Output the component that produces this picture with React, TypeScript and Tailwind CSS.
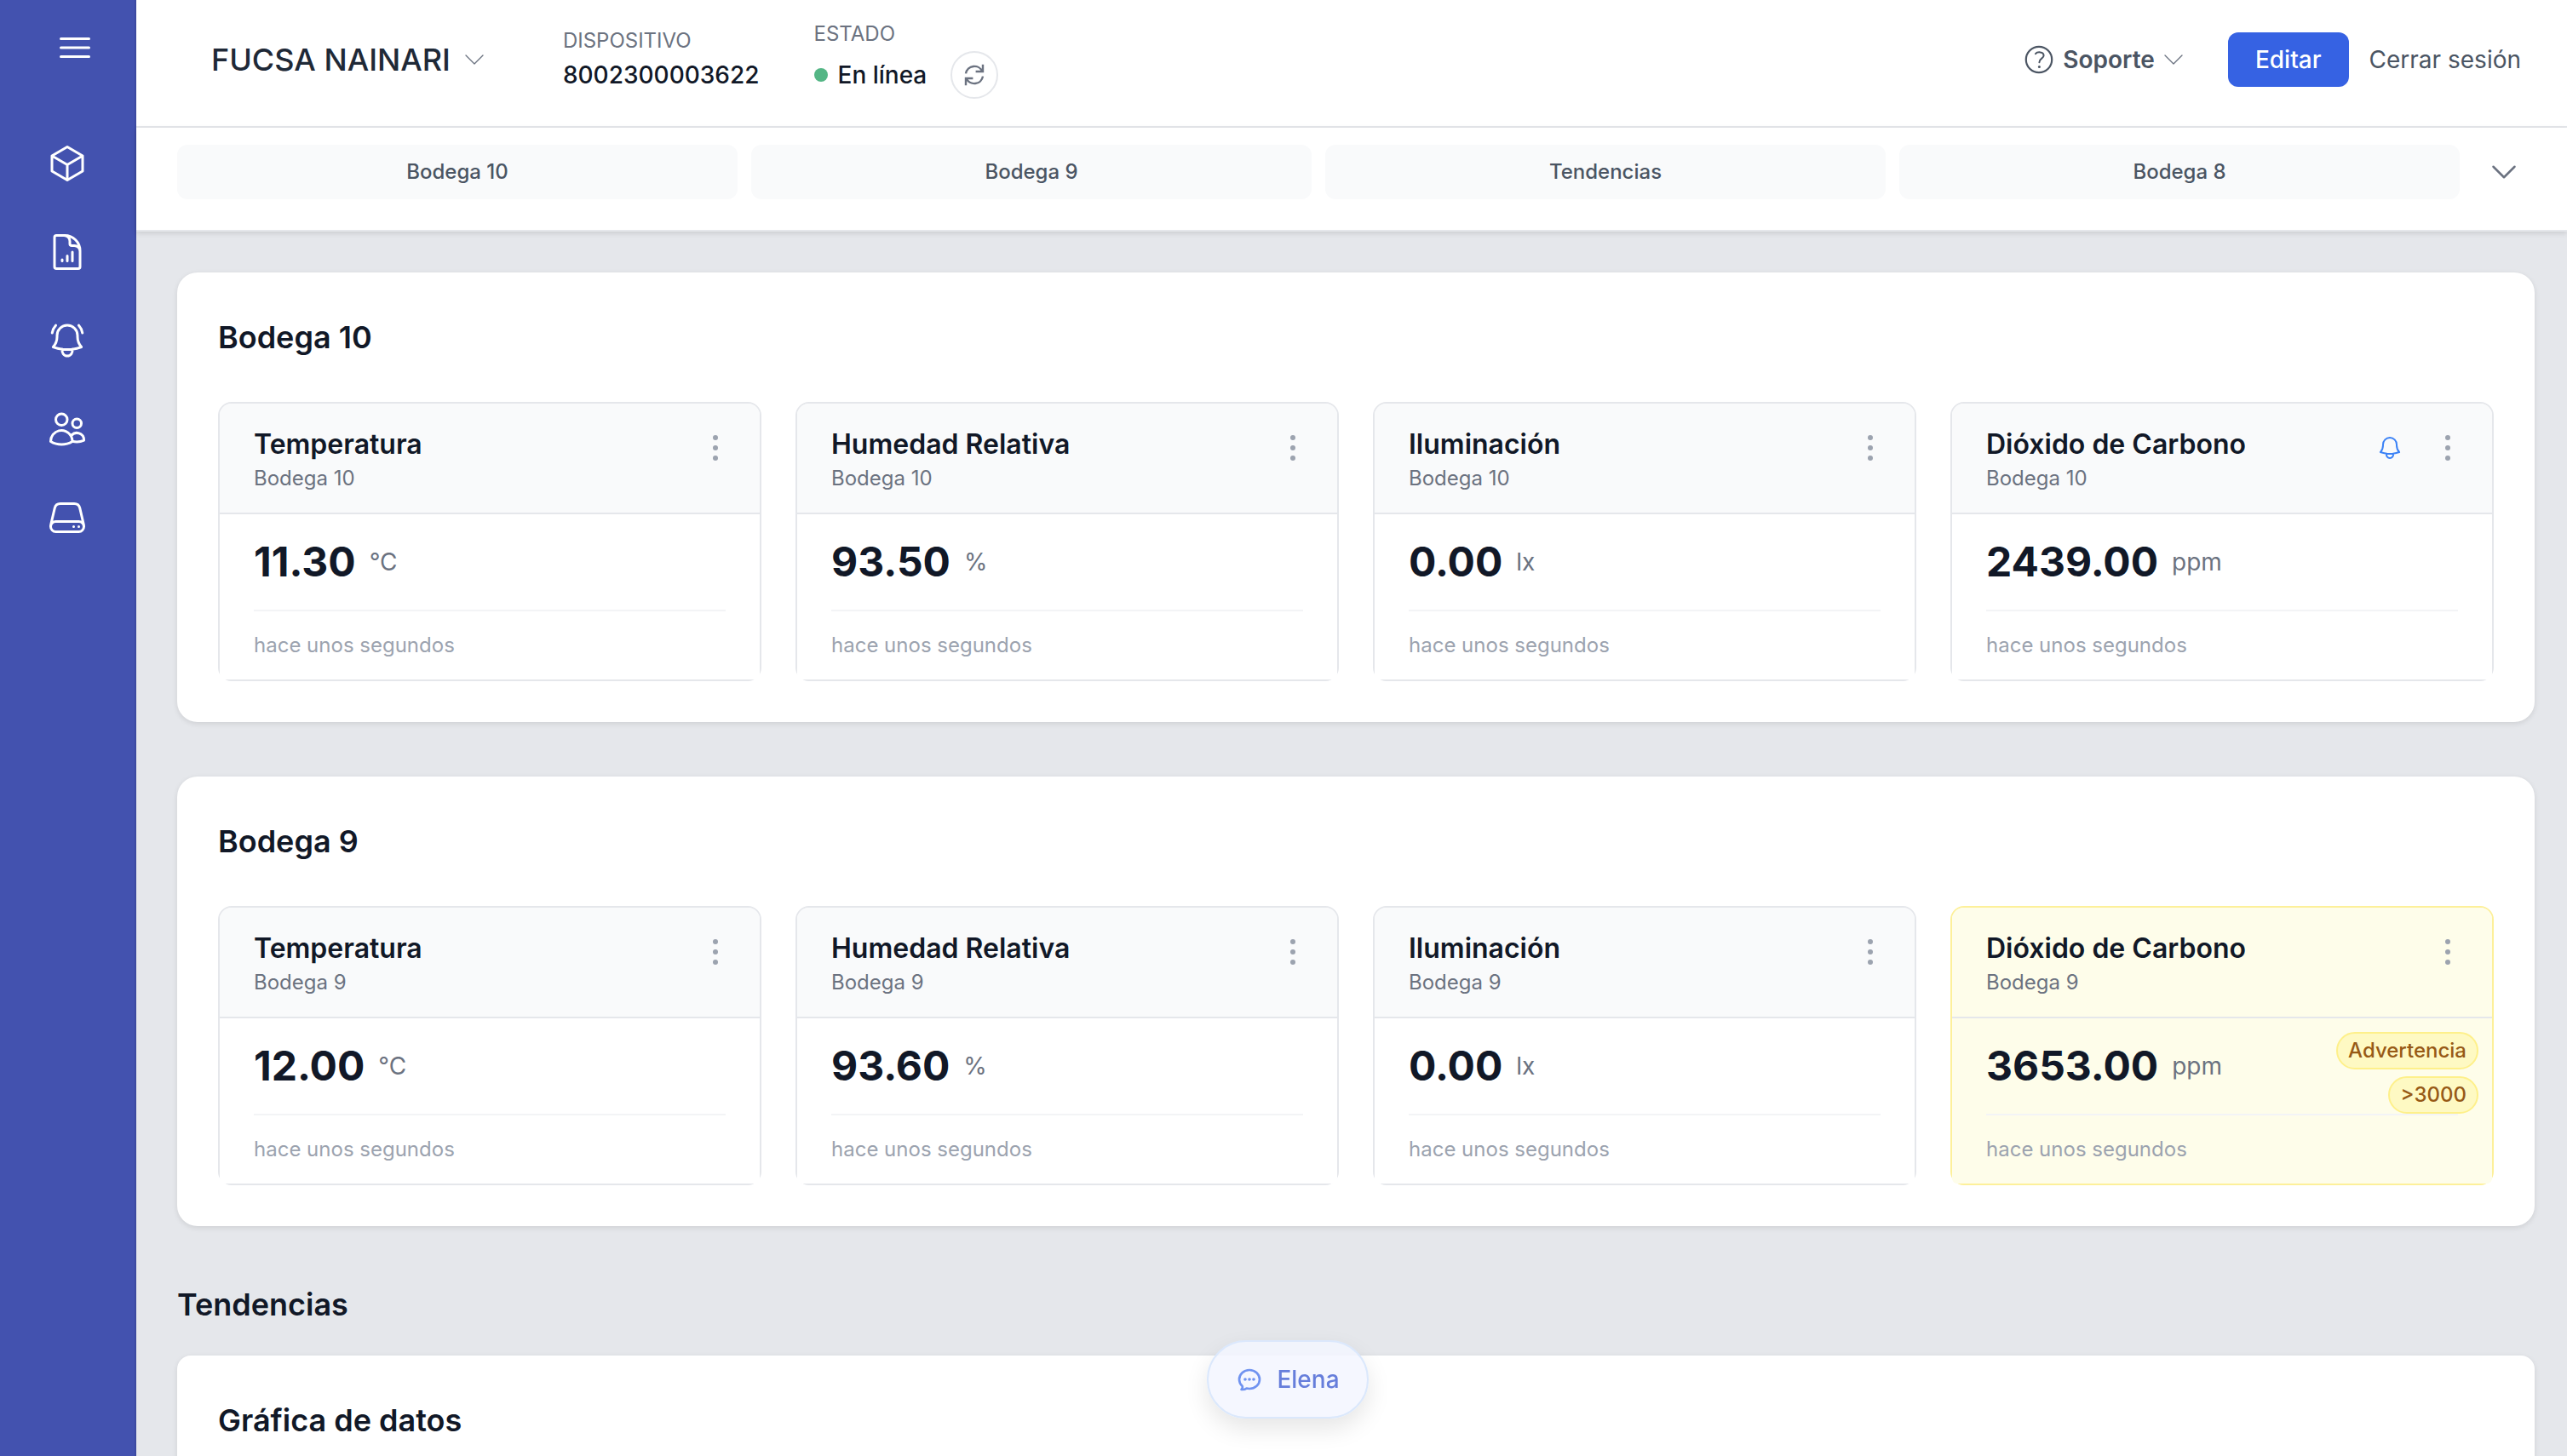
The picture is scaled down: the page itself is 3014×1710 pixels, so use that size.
import type { ReactNode } from "react";
import clsx from "clsx";
import {
  HiOutlineBars3,
  HiOutlineBell,
  HiOutlineBellAlert,
  HiOutlineChatBubbleOvalLeftEllipsis,
  HiOutlineChevronDown,
  HiOutlineCube,
  HiOutlineDocumentChartBar,
  HiOutlineServer,
  HiOutlineUsers,
} from "react-icons/hi2";

type Reading = {
  name: string;
  value: string;
  unit: string;
  bell?: boolean;
  warning?: string;
};

type Group = {
  title: string;
  readings: Reading[];
};

const navItems = [
  { label: "Dispositivos", icon: HiOutlineCube },
  { label: "Reportes", icon: HiOutlineDocumentChartBar },
  { label: "Alertas", icon: HiOutlineBellAlert },
  { label: "Usuarios", icon: HiOutlineUsers },
  { label: "Equipos", icon: HiOutlineServer },
];

const tabs = ["Bodega 10", "Bodega 9", "Tendencias", "Bodega 8"];

const groups: Group[] = [
  {
    title: "Bodega 10",
    readings: [
      { name: "Temperatura", value: "11.30", unit: "°C" },
      { name: "Humedad Relativa", value: "93.50", unit: "%" },
      { name: "Iluminación", value: "0.00", unit: "lx" },
      { name: "Dióxido de Carbono", value: "2439.00", unit: "ppm", bell: true },
    ],
  },
  {
    title: "Bodega 9",
    readings: [
      { name: "Temperatura", value: "12.00", unit: "°C" },
      { name: "Humedad Relativa", value: "93.60", unit: "%" },
      { name: "Iluminación", value: "0.00", unit: "lx" },
      { name: "Dióxido de Carbono", value: "3653.00", unit: "ppm", warning: ">3000" },
    ],
  },
];

function RefreshIcon() {
  return (
    <svg className="h-7 w-7" viewBox="0 0 28 28" fill="none" stroke="currentColor" strokeWidth="2.4" aria-hidden="true">
      <path d="M4 12.4A10.2 10.2 0 0 1 23.4 10" />
      <path d="M24 1.8V10H15.6" />
      <path d="M24 15.6A10.2 10.2 0 0 1 4.6 18" />
      <path d="M4 26.2V18H12.4" />
    </svg>
  );
}

function HelpIcon() {
  return (
    <svg className="h-9 w-9" viewBox="0 0 36 36" fill="none" stroke="currentColor" strokeLinecap="round" aria-hidden="true">
      <circle cx="18" cy="18" r="15.2" strokeWidth="2.2" />
      <path d="M14 11.2C16 8.6 23.6 8.4 23.6 13.2C23.6 16.8 18.4 16.6 18.4 21.2" strokeWidth="2" />
      <circle cx="18.4" cy="26.4" r="1.5" fill="currentColor" stroke="none" />
    </svg>
  );
}

function DotsIcon() {
  return (
    <svg className="h-12 w-12" viewBox="0 0 48 48" fill="currentColor" aria-hidden="true">
      <circle cx="24" cy="12" r="3" />
      <circle cx="24" cy="24" r="3" />
      <circle cx="24" cy="36" r="3" />
    </svg>
  );
}

function Sidebar() {
  return (
    <aside className="flex w-40 shrink-0 flex-col border-r-2 border-[#3d4aa1] bg-[#4352af] text-white">
      <button aria-label="Menú" className="ml-16 mt-8 mb-[60px] w-12">
        <HiOutlineBars3 className="h-12 w-12" />
      </button>
      <nav className="flex flex-col">
        {navItems.map(({ label, icon: Icon }) => (
          <a key={label} href="#" aria-label={label} className="flex justify-center py-7">
            <Icon className="h-12 w-12" />
          </a>
        ))}
      </nav>
    </aside>
  );
}

function Header() {
  return (
    <header className="flex items-center border-b-2 border-gray-200 bg-white pt-6 pr-[54px] pb-8 pl-22">
      <button className="flex items-center gap-3 text-[36px] leading-[56px] font-medium text-[#1f2937]">
        FUCSA NAINARI
        <HiOutlineChevronDown strokeWidth={1} className="h-8 w-8 text-[#6b7280]" />
      </button>
      <div className="ml-22 flex flex-col gap-1">
        <span className="text-[24px] leading-8 text-[#6b7280]">DISPOSITIVO</span>
        <span className="text-[28px] leading-10 font-medium text-[#111827]">8002300003622</span>
      </div>
      <div className="ml-16 flex flex-col gap-1">
        <span className="text-[24px] leading-8 text-[#6b7280]">ESTADO</span>
        <div className="flex items-center">
          <span className="h-4 w-4 rounded-full bg-[#54b685]" />
          <span className="ml-3 text-[28px] leading-10 font-medium text-[#111827]">En línea</span>
          <button
            aria-label="Actualizar"
            className="ml-7 flex h-14 w-14 items-center justify-center rounded-full border-2 border-gray-200 text-[#6b7280]"
          >
            <RefreshIcon />
          </button>
        </div>
      </div>
      <div className="ml-auto flex items-center text-[28px] leading-10">
        <button className="flex items-center text-[#4b5563]">
          <HelpIcon />
          <span className="ml-2.5 font-semibold">Soporte</span>
          <HiOutlineChevronDown strokeWidth={1} className="ml-1.5 h-8 w-8 text-[#6b7280]" />
        </button>
        <button className="ml-12 rounded-xl bg-[#3662e3] px-8 py-3 font-medium text-white">Editar</button>
        <a href="#" className="ml-6 text-[#4b5563]">
          Cerrar sesión
        </a>
      </div>
    </header>
  );
}

function TabBar() {
  return (
    <nav className="relative flex items-center gap-8 border-b-2 border-gray-200 bg-white pt-5 pr-[54px] pb-9 pl-12 shadow-[0_2px_6px_rgba(0,0,0,0.12)]">
      <div className="grid flex-1 grid-cols-4 gap-4">
        {tabs.map((tab) => (
          <a
            key={tab}
            href="#"
            className="rounded-xl bg-[#f9fafb] py-4 text-center text-[24px] leading-8 font-medium text-[#4b5563]"
          >
            {tab}
          </a>
        ))}
      </div>
      <button aria-label="Mostrar más" className="text-[#6b7280]">
        <HiOutlineChevronDown className="h-10 w-10" />
      </button>
    </nav>
  );
}

function Badge({ children }: { children: ReactNode }) {
  return (
    <span className="rounded-full border-2 border-[#fef08a] bg-[#fef9c3] px-3 py-1 text-[24px] leading-8 font-medium text-[#975a16]">
      {children}
    </span>
  );
}

function ReadingCard({ reading, place }: { reading: Reading; place: string }) {
  const warn = Boolean(reading.warning);

  return (
    <article className={clsx("rounded-2xl border-2", warn ? "border-[#fdf09a]" : "border-gray-200")}>
      <div
        className={clsx(
          "flex items-start justify-between rounded-t-[14px] border-b-2 border-gray-200 px-10 py-6",
          warn ? "bg-[#fefdea]" : "bg-[#f9fafb]"
        )}
      >
        <div>
          <h3 className="text-[32px] leading-12 font-semibold text-[#111827]">{reading.name}</h3>
          <p className="text-[24px] leading-8 text-[#6b7280]">{place}</p>
        </div>
        <div className="-mr-3 flex items-center gap-7 pt-1">
          {reading.bell && <HiOutlineBell className="h-8 w-8 text-[#3b82f6]" />}
          <button aria-label="Opciones" className="text-[#9ca3af]">
            <DotsIcon />
          </button>
        </div>
      </div>

      {/* Current value */}
      <div className={clsx("relative rounded-b-md px-10 py-6", warn ? "bg-[#fefdea]" : "bg-white")}>
        <div className="flex items-center gap-4">
          <span className="text-[48px] leading-16 font-bold text-[#111827]">{reading.value}</span>
          <span className="text-[28px] leading-10 text-[#6b7280]">{reading.unit}</span>
        </div>
        <p className="mt-6 border-t-2 border-gray-100 pt-6 text-[24px] leading-8 text-[#9ca3af]">hace unos segundos</p>
        {warn && (
          <div className="absolute top-4 right-4 flex flex-col items-end gap-2">
            <Badge>Advertencia</Badge>
            <Badge>{reading.warning}</Badge>
          </div>
        )}
      </div>
    </article>
  );
}

function GroupPanel({ group }: { group: Group }) {
  return (
    <section className="rounded-3xl bg-white p-12 shadow-[0_2px_6px_rgba(0,0,0,0.1)]">
      <h2 className="mb-12 text-[36px] leading-[56px] font-semibold text-[#111827]">{group.title}</h2>
      <div className="grid grid-cols-4 gap-10">
        {group.readings.map((reading) => (
          <ReadingCard key={reading.name} reading={reading} place={group.title} />
        ))}
      </div>
    </section>
  );
}

function ChatButton() {
  return (
    <div className="fixed inset-x-0 bottom-11 flex justify-center pl-2.5">
      <button className="flex items-center gap-4 rounded-full border-2 border-[#dbe8fc] bg-[#f3f6ff]/85 px-8 py-6 text-[28px] leading-10 font-medium text-[#667edb] shadow-[0_12px_28px_rgba(0,0,0,0.1)]">
        <HiOutlineChatBubbleOvalLeftEllipsis strokeWidth={2} className="h-8 w-8 text-[#7093f0]" />
        Elena
      </button>
    </div>
  );
}

export default function App() {
  return (
    <div className="flex h-screen overflow-hidden bg-gray-200 font-['Inter',sans-serif]">
      <Sidebar />
      <div className="flex min-w-0 flex-1 flex-col">
        <Header />
        <TabBar />
        <main className="flex min-h-0 flex-1 flex-col gap-16 overflow-hidden pt-12 pr-[38px] pl-12">
          {groups.map((group) => (
            <GroupPanel key={group.title} group={group} />
          ))}
          <section>
            <h2 className="mb-8 text-[36px] leading-[56px] font-semibold text-[#111827]">Tendencias</h2>
            <div className="min-h-96 rounded-2xl bg-white p-12 shadow-[0_2px_6px_rgba(0,0,0,0.1)]">
              <h3 className="text-[36px] leading-[56px] font-semibold text-[#111827]">Gráfica de datos</h3>
            </div>
          </section>
        </main>
      </div>
      <ChatButton />
    </div>
  );
}
